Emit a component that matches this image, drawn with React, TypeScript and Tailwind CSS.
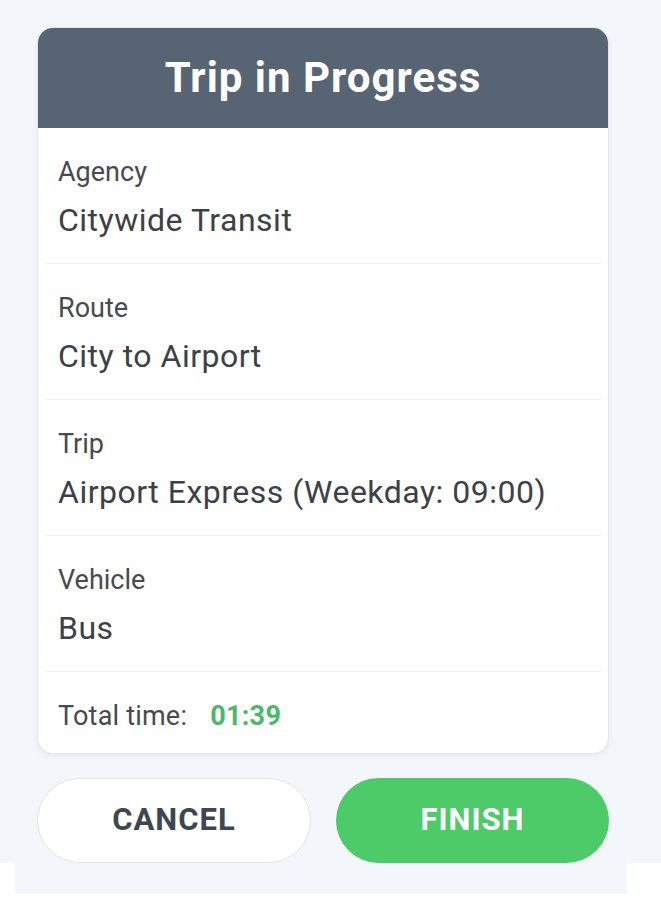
import React from 'react';

const rows = [
  { label: 'Agency', value: 'Citywide Transit' },
  { label: 'Route', value: 'City to Airport' },
  { label: 'Trip', value: 'Airport Express (Weekday: 09:00)' },
  { label: 'Vehicle', value: 'Bus' },
];

export default function App() {
  return (
    <div className="w-[661px] h-[900px] bg-white font-['Roboto',sans-serif]">
      <div className="bg-[#f3f6fb] pt-[27px] px-[37px]">
        <div className="w-[572px] rounded-[16px] bg-white border border-[#e2e6eb] shadow-[0_2px_6px_rgba(0,0,0,0.06)] overflow-hidden">
          <div className="h-[100px] bg-[#576474] flex items-center justify-center">
            <h1 className="text-[42px] leading-[48px] font-bold text-white tracking-[1px]">Trip in Progress</h1>
          </div>
          <div className="px-[7px]">
            {rows.map((r) => (
              <div key={r.label} className="h-[136px] border-b border-[#eef0f3] pl-[13px] pt-[28px]">
                <div className="text-[27px] leading-[32px] text-[#474b50]">{r.label}</div>
                <div className="mt-[12px] text-[32px] leading-[40px] tracking-[0.5px] text-[#3d4146]">{r.value}</div>
              </div>
            ))}
            <div className="h-[81px] pl-[13px] pt-[28px] flex items-start">
              <span className="text-[27px] leading-[32px] tracking-[0.2px] text-[#474b50]">Total time:</span>
              <span className="ml-[23px] text-[27px] leading-[32px] tracking-[0.3px] font-bold text-[#4cb96a]">01:39</span>
            </div>
          </div>
        </div>
        <div className="relative z-10 mt-[24px] -mb-[32px] flex gap-[25px]">
          <button className="w-[274px] h-[85px] rounded-full bg-white border border-[#e1e4e8] text-[31px] font-bold tracking-[1px] text-[#3e4651]">
            CANCEL
          </button>
          <button className="w-[273px] h-[85px] rounded-full bg-[#4ccb68] text-[31px] font-bold tracking-[1px] text-white">
            FINISH
          </button>
        </div>
      </div>
      <div className="mx-[15px] w-[612px] h-[63px] bg-[#f3f6fb]" />
    </div>
  );
}
